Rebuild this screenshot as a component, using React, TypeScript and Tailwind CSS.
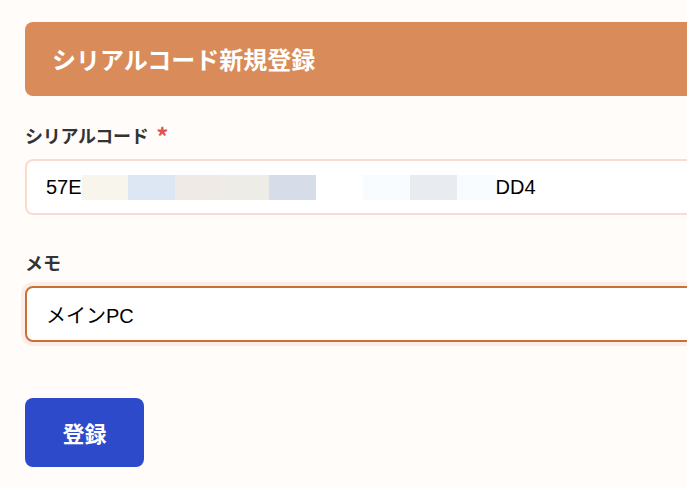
const redacted = [
  { w: 'w-[46px]', c: 'bg-[#f8f5ec]' },
  { w: 'w-[47px]', c: 'bg-[#dce7f3]' },
  { w: 'w-[47px]', c: 'bg-[#efeae6]' },
  { w: 'w-[47px]', c: 'bg-[#edece6]' },
  { w: 'w-[47px]', c: 'bg-[#d6dce8]' },
  { w: 'w-[47px]', c: 'bg-white' },
  { w: 'w-[47px]', c: 'bg-[#f8fcfe]' },
  { w: 'w-[47px]', c: 'bg-[#e8ecf1]' },
  { w: 'w-[39px]', c: 'bg-[#f8fcff]' },
]

export default function App() {
  return (
    <div
      className="min-h-screen overflow-hidden bg-[#fffcfa] pl-[25px] pt-[22px]"
      style={{ fontFamily: '"Liberation Sans", "Noto Sans CJK JP", sans-serif' }}
    >
      <div className="w-[760px]">
        <div className="flex h-[74px] items-center rounded-lg bg-[#d98b59] px-[27px]">
          <h1 className="text-[24px] font-bold text-white" style={{ fontFamily: '"Noto Sans CJK JP", sans-serif' }}>
            シリアルコード新規登録
          </h1>
        </div>

        <form className="mt-[26px]" onSubmit={(e) => e.preventDefault()}>
          <label
            className="flex h-[26px] items-start text-[18px] font-bold leading-[26px] tracking-[-0.3px] text-[#333]"
            style={{ fontFamily: '"Noto Sans CJK JP", sans-serif' }}
          >
            シリアルコード
            <span className="ml-[8px] mt-[4px] text-[24px] leading-[20px] text-[#e0534f]">*</span>
          </label>
          <div className="mt-[11px] flex h-[56px] items-center rounded-lg border-2 border-[#f9dccf] bg-white px-[19px] text-[20px] text-black">
            <span>57E</span>
            <span className="flex h-[25px]">
              {redacted.map((b, i) => (
                <span key={i} className={`${b.w} ${b.c} h-full`} />
              ))}
            </span>
            <span>DD4</span>
          </div>

          <label
            className="mt-[34px] block text-[18px] font-bold leading-[26px] text-[#333]"
            style={{ fontFamily: '"Noto Sans CJK JP", sans-serif' }}
          >
            メモ
          </label>
          <input
            defaultValue="メインPC"
            className="mt-[11px] block h-[56px] w-full rounded-lg border-2 border-[#c87137] bg-white px-[19px] text-[20px] text-black shadow-[0_0_0_4px_#fbeee6] outline-none"
          />

          <button
            type="submit"
            className="mt-[56px] flex h-[69px] w-[119px] items-center justify-center rounded-lg bg-[#2d4acb] text-[22px] font-bold text-white"
            style={{ fontFamily: '"Noto Sans CJK JP", sans-serif' }}
          >
            登録
          </button>
        </form>
      </div>
    </div>
  )
}
